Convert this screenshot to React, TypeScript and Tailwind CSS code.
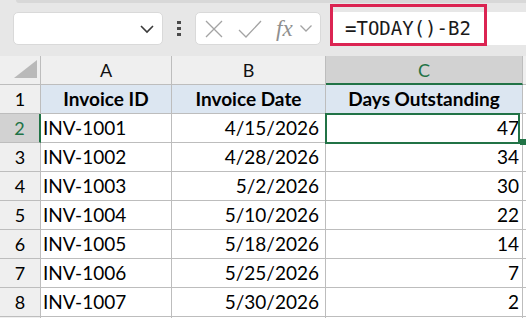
import React from "react";

const rows: [string, string, string][] = [
  ["INV-1001", "4/15/2026", "47"],
  ["INV-1002", "4/28/2026", "34"],
  ["INV-1003", "5/2/2026", "30"],
  ["INV-1004", "5/10/2026", "22"],
  ["INV-1005", "5/18/2026", "14"],
  ["INV-1006", "5/25/2026", "7"],
  ["INV-1007", "5/30/2026", "2"],
];

const cellFont = { fontFamily: "Lato, 'Liberation Sans', sans-serif" };

export default function App() {
  return (
    <div className="relative w-[526px] h-[318px] overflow-hidden bg-[#e7e7e7]" style={cellFont}>
      {/* top shadow strip */}
      <div className="absolute left-[16px] right-0 top-0 h-[3px] rounded-bl-[4px] bg-[#d8d8d8]" />
      {/* toolbar */}
      <div className="flex h-[56px] items-center pl-[13px] pt-[1px]">
        <div className="flex h-[33px] w-[150px] items-center justify-end rounded-[5px] border border-[#d9d9d9] bg-white pr-[7px]">
          <svg width="16" height="10" viewBox="0 0 16 10" fill="none">
            <path d="M2 2 L8 8 L14 2" stroke="#3a3a3a" strokeWidth="1.6" />
          </svg>
        </div>
        <div className="ml-[14px] flex flex-col gap-[3px]">
          <div className="h-[3px] w-[4px] bg-[#4a4a4a]" />
          <div className="h-[3px] w-[4px] bg-[#4a4a4a]" />
          <div className="h-[3px] w-[4px] bg-[#4a4a4a]" />
        </div>
        <div className="ml-[14px] flex h-[33px] w-[126px] items-center rounded-[5px] border border-[#d9d9d9] bg-white pl-[8px]">
          <svg width="20" height="20" viewBox="0 0 20 20" fill="none">
            <path d="M2 2 L18 18 M18 2 L2 18" stroke="#a3a3a3" strokeWidth="1.3" />
          </svg>
          <svg className="ml-[14px]" width="24" height="20" viewBox="0 0 24 20" fill="none">
            <path d="M1 11 L8 18 L23 2" stroke="#a3a3a3" strokeWidth="1.3" />
          </svg>
          <span
            className="ml-[14px] text-[23px] italic leading-none text-[#8f8f8f]"
            style={{ fontFamily: "'Liberation Serif', serif" }}
          >
            fx
          </span>
          <svg className="ml-[6px]" width="14" height="9" viewBox="0 0 14 9" fill="none">
            <path d="M1.5 1.5 L7 7 L12.5 1.5" stroke="#a3a3a3" strokeWidth="1.3" />
          </svg>
        </div>
        <div className="relative ml-[9px] flex h-[33px] flex-1 items-center bg-white pl-[15px]">
          <span
            className="text-[19px] leading-none text-[#1a1a1a]"
            style={{ fontFamily: "'DejaVu Sans Mono', monospace", letterSpacing: "0px" }}
          >
            =TODAY()-B2
          </span>
          <div className="absolute left-0 top-[-8px] h-[42px] w-[157px] border-[3px] border-[#db2452]" />
        </div>
      </div>

      {/* grid */}
      <div className="relative">
        {/* column header row */}
        <div className="flex h-[29px] bg-[#efefef] text-[18px] leading-[28px] text-[#111]">
          <div className="relative w-[41px] border-b border-r border-[#bdbdbd]">
            <svg className="absolute left-[14px] top-[4px]" width="23" height="18" viewBox="0 0 23 18">
              <polygon points="0,18 23,18 23,0" fill="#b9b9b9" />
            </svg>
          </div>
          <div className="w-[131px] border-b border-r border-[#bdbdbd] text-center">A</div>
          <div className="w-[154px] border-b border-r border-[#bdbdbd] text-center">B</div>
          <div className="w-[197px] border-b-2 border-r border-b-[#217346] border-r-[#bdbdbd] bg-[#d2d2d2] text-center text-[#217346]">
            C
          </div>
          <div className="flex-1 border-b border-[#bdbdbd]" />
        </div>

        {/* row 1 headers */}
        <div className="flex h-[29px] text-[19px] leading-[28px] text-black">
          <div className="w-[41px] border-b border-r border-[#bdbdbd] bg-[#efefef] text-center text-[18px]">1</div>
          <div className="w-[131px] border-b border-r border-[#bdbdbd] bg-[#dce6f1] text-center font-bold">Invoice ID</div>
          <div className="w-[154px] border-b border-r border-[#bdbdbd] bg-[#dce6f1] text-center font-bold">Invoice Date</div>
          <div className="w-[197px] border-b border-r border-[#bdbdbd] bg-[#dce6f1] text-center font-bold">
            Days Outstanding
          </div>
          <div className="flex-1 border-b border-[#bdbdbd] bg-white" />
        </div>

        {rows.map((r, i) => {
          const selected = i === 0;
          return (
            <div key={r[0]} className="flex h-[29px] bg-white text-[19px] leading-[28px] text-black">
              <div
                className={
                  selected
                    ? "w-[41px] border-b border-r-2 border-b-[#bdbdbd] border-r-[#217346] bg-[#d2d2d2] text-center text-[18px] text-[#217346]"
                    : "w-[41px] border-b border-r border-[#bdbdbd] bg-[#efefef] text-center text-[18px]"
                }
              >
                {i + 2}
              </div>
              <div className="w-[131px] border-b border-r border-[#bdbdbd] pl-[2px]">{r[0]}</div>
              <div className="w-[154px] border-b border-r border-[#bdbdbd] pr-[6px] text-right">{r[1]}</div>
              <div className="w-[197px] border-b border-r border-[#bdbdbd] pr-[3px] text-right">{r[2]}</div>
              <div className="flex-1 border-b border-[#bdbdbd]" />
            </div>
          );
        })}
        <div className="flex h-[29px] bg-white">
          <div className="w-[41px] border-r border-[#bdbdbd] bg-[#efefef]" />
          <div className="w-[131px] border-r border-[#bdbdbd]" />
          <div className="w-[154px] border-r border-[#bdbdbd]" />
          <div className="w-[197px] border-r border-[#bdbdbd]" />
        </div>

        {/* selection */}
        <div className="absolute left-[325px] top-[57px] h-[31px] w-[195px] border-2 border-[#217346]" />
        <div className="absolute left-[520px] top-[83px] h-[6px] w-[6px] bg-[#217346]" />
      </div>
    </div>
  );
}
